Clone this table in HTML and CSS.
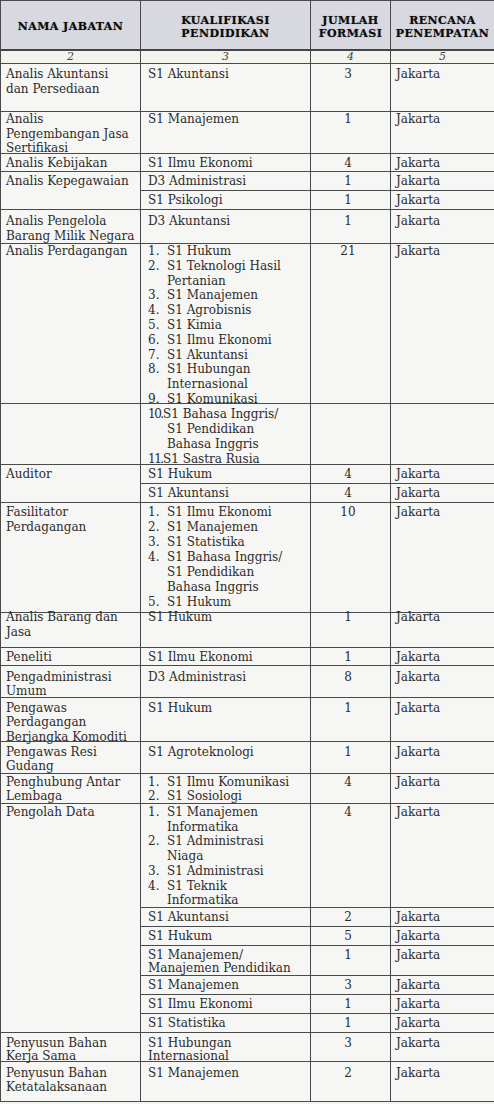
FILE: index.html
```html
<!DOCTYPE html>
<html lang="id">
<head>
<meta charset="utf-8">
<title>Formasi Jabatan</title>
<link rel="stylesheet" href="styles.css">
</head>
<body>
<table class="formasi">
  <colgroup>
    <col class="c1"><col class="c2"><col class="c3"><col class="c4">
  </colgroup>
  <thead>
    <tr class="head">
      <th>NAMA JABATAN</th>
      <th>KUALIFIKASI<br>PENDIDIKAN</th>
      <th>JUMLAH<br>FORMASI</th>
      <th>RENCANA<br>PENEMPATAN</th>
    </tr>
    <tr class="nums">
      <td>2</td><td>3</td><td>4</td><td>5</td>
    </tr>
  </thead>
  <tbody>
    <tr class="h48 pt3 lh145"><td><div class="cell">Analis Akuntansi<br>dan Persediaan</div></td><td>S1 Akuntansi</td><td class="n">3</td><td>Jakarta</td></tr>
    <tr class="h42 pt0 lh145"><td><div class="cell">Analis<br>Pengembangan Jasa<br>Sertifikasi</div></td><td>S1 Manajemen</td><td class="n">1</td><td>Jakarta</td></tr>
    <tr class="h18"><td>Analis Kebijakan</td><td>S1 Ilmu Ekonomi</td><td class="n">4</td><td>Jakarta</td></tr>
    <tr class="h19"><td rowspan="2">Analis Kepegawaian</td><td>D3 Administrasi</td><td class="n">1</td><td>Jakarta</td></tr>
    <tr class="h19 cont"><td>S1 Psikologi</td><td class="n">1</td><td>Jakarta</td></tr>
    <tr class="h34 pt4 lh145"><td><div class="cell">Analis Pengelola<br>Barang Milik Negara</div></td><td>D3 Akuntansi</td><td class="n">1</td><td>Jakarta</td></tr>
    <tr class="h160 pt0 lh148"><td>Analis Perdagangan</td>
      <td>
        <ol class="list">
          <li><span class="no">1.</span><span>S1 Hukum</span></li>
          <li><span class="no">2.</span><span>S1 Teknologi Hasil<br>Pertanian</span></li>
          <li><span class="no">3.</span><span>S1 Manajemen</span></li>
          <li><span class="no">4.</span><span>S1 Agrobisnis</span></li>
          <li><span class="no">5.</span><span>S1 Kimia</span></li>
          <li><span class="no">6.</span><span>S1 Ilmu Ekonomi</span></li>
          <li><span class="no">7.</span><span>S1 Akuntansi</span></li>
          <li><span class="no">8.</span><span>S1 Hubungan<br>Internasional</span></li>
          <li><span class="no">9.</span><span>S1 Komunikasi</span></li>
        </ol>
      </td><td class="n">21</td><td>Jakarta</td></tr>
    <tr class="h61 pt25"><td></td>
      <td>
        <ol class="list">
          <li class="wide"><span class="no">10.</span><span class="txt">S1 Bahasa Inggris/<br>S1 Pendidikan<br>Bahasa Inggris</span></li>
          <li class="wide"><span class="no">11.</span><span class="txt">S1 Sastra Rusia</span></li>
        </ol>
      </td><td></td><td></td></tr>
    <tr class="h19"><td rowspan="2">Auditor</td><td>S1 Hukum</td><td class="n">4</td><td>Jakarta</td></tr>
    <tr class="h19 cont"><td>S1 Akuntansi</td><td class="n">4</td><td>Jakarta</td></tr>
    <tr class="h110"><td><div class="cell">Fasilitator<br>Perdagangan</div></td>
      <td>
        <ol class="list">
          <li><span class="no">1.</span><span>S1 Ilmu Ekonomi</span></li>
          <li><span class="no">2.</span><span>S1 Manajemen</span></li>
          <li><span class="no">3.</span><span>S1 Statistika</span></li>
          <li><span class="no">4.</span><span>S1 Bahasa Inggris/<br>S1 Pendidikan<br>Bahasa Inggris</span></li>
          <li><span class="no">5.</span><span>S1 Hukum</span></li>
        </ol>
      </td><td class="n">10</td><td>Jakarta</td></tr>
    <tr class="h35 up"><td><div class="cell">Analis Barang dan<br>Jasa</div></td><td>S1 Hukum</td><td class="n">1</td><td>Jakarta</td></tr>
    <tr class="h17"><td>Peneliti</td><td>S1 Ilmu Ekonomi</td><td class="n">1</td><td>Jakarta</td></tr>
    <tr class="h32 pt4 lh14"><td><div class="cell">Pengadministrasi<br>Umum</div></td><td>D3 Administrasi</td><td class="n">8</td><td>Jakarta</td></tr>
    <tr class="h44 pt25 lh147"><td><div class="cell">Pengawas<br>Perdagangan<br>Berjangka Komoditi</div></td><td>S1 Hukum</td><td class="n">1</td><td>Jakarta</td></tr>
    <tr class="h32 pt3 lh14"><td><div class="cell">Pengawas Resi<br>Gudang</div></td><td>S1 Agroteknologi</td><td class="n">1</td><td>Jakarta</td></tr>
    <tr class="h30 pt2 lh135"><td><div class="cell">Penghubung Antar<br>Lembaga</div></td>
      <td>
        <ol class="list">
          <li><span class="no">1.</span><span>S1 Ilmu Komunikasi</span></li>
          <li><span class="no">2.</span><span>S1 Sosiologi</span></li>
        </ol>
      </td><td class="n">4</td><td>Jakarta</td></tr>
    <tr class="h104 pt1 lh147"><td rowspan="7">Pengolah Data</td>
      <td>
        <ol class="list">
          <li><span class="no">1.</span><span>S1 Manajemen<br>Informatika</span></li>
          <li><span class="no">2.</span><span>S1 Administrasi<br>Niaga</span></li>
          <li><span class="no">3.</span><span>S1 Administrasi</span></li>
          <li><span class="no">4.</span><span>S1 Teknik<br>Informatika</span></li>
        </ol>
      </td><td class="n">4</td><td>Jakarta</td></tr>
    <tr class="h19 cont"><td>S1 Akuntansi</td><td class="n">2</td><td>Jakarta</td></tr>
    <tr class="h19 cont"><td>S1 Hukum</td><td class="n">5</td><td>Jakarta</td></tr>
    <tr class="h30 pt3 lh13 cont"><td><div class="cell">S1 Manajemen/<br>Manajemen Pendidikan</div></td><td class="n">1</td><td>Jakarta</td></tr>
    <tr class="h19 cont"><td>S1 Manajemen</td><td class="n">3</td><td>Jakarta</td></tr>
    <tr class="h19 cont"><td>S1 Ilmu Ekonomi</td><td class="n">1</td><td>Jakarta</td></tr>
    <tr class="h19 cont"><td>S1 Statistika</td><td class="n">1</td><td>Jakarta</td></tr>
    <tr class="h29 pt4 lh13"><td><div class="cell">Penyusun Bahan<br>Kerja Sama</div></td><td><div class="cell">S1 Hubungan<br>Internasional</div></td><td class="n">3</td><td>Jakarta</td></tr>
    <tr class="h40 pt4 lh14"><td><div class="cell">Penyusun Bahan<br>Ketatalaksanaan</div></td><td>S1 Manajemen</td><td class="n">2</td><td>Jakarta</td></tr>
  </tbody>
</table>
</body>
</html>
```
FILE: styles.css
```css
html, body {
  margin: 0;
  padding: 0;
  background: #f3f3f1;
}

.formasi {
  width: 494px;
  table-layout: fixed;
  border-collapse: collapse;
  font-family: "DejaVu Serif", "Liberation Serif", serif;
  font-size: 12px;
  line-height: 15px;
  color: #2c2c2c;
  background: #f6f6f4;
  white-space: nowrap;
}

.c1 { width: 140px; }
.c2 { width: 170px; }
.c3 { width: 80px; }
.c4 { width: 104px; }

.formasi td,
.formasi th {
  border: 1px solid #4a4a4a;
  padding: 2px 0 0 5px;
  vertical-align: top;
  overflow: visible;
}

/* second column (also the first cell of rows continuing a rowspan) */
.formasi td:nth-child(2),
.formasi .cont td:first-child { padding-left: 7px; }

.head th {
  height: 44px;
  padding: 4px 0 0 0;
  background: #d8d8e0;
  font-size: 11px;
  line-height: 13.5px;
  font-weight: bold;
  color: #0c0c0c;
  text-align: center;
  vertical-align: middle;
  border-bottom: 2px solid #444;
  letter-spacing: 0.45px;
  text-shadow: 0 0 1px rgba(60, 60, 60, 0.6);
}

.formasi .nums td {
  height: 11px;
  font-size: 11px;
  line-height: 12px;
  font-style: italic;
  text-align: center;
  padding: 0;
  color: #444;
  background: #f4f4ee;
}

.formasi td.n {
  text-align: center;
  padding-left: 0;
  padding-right: 5px;
}

/* multi-line content never stretches its row */
.cell { height: 0; }

.list {
  list-style: none;
  margin: 0;
  padding: 0;
  height: 0;
}
.list li { display: flex; }
.list .no { flex: 0 0 19px; }
.list .wide .no { letter-spacing: -1.5px; }
.list .wide .txt { text-indent: -4px; }

/* row heights */
.h17 { height: 17px; }
.h18 { height: 18px; }
.h19 { height: 19px; }
.h29 { height: 29px; }
.h30 { height: 30px; }
.h32 { height: 32px; }
.h34 { height: 34px; }
.h35 { height: 35px; }
.h40 { height: 40px; }
.h42 { height: 42px; }
.h44 { height: 44px; }
.h48 { height: 48px; }
.h61 { height: 61px; }
.h104 { height: 104px; }
.h110 { height: 110px; }
.h160 { height: 160px; }

/* text placement inside rows */
.pt0 td { padding-top: 0; }
.pt1 td { padding-top: 1px; }
.pt2 td { padding-top: 2px; }
.pt25 td { padding-top: 2.5px; }
.pt3 td { padding-top: 3px; }
.pt4 td { padding-top: 4px; }

.lh13 td { line-height: 13px; }
.lh135 td { line-height: 13.5px; }
.lh14 td { line-height: 14px; }
.lh145 td { line-height: 14.5px; }
.lh147 td { line-height: 14.7px; }
.lh148 td { line-height: 14.8px; }

.up td { padding-top: 0; line-height: 9.5px; }
.up .cell { line-height: 15px; margin-top: -2.75px; }
```
